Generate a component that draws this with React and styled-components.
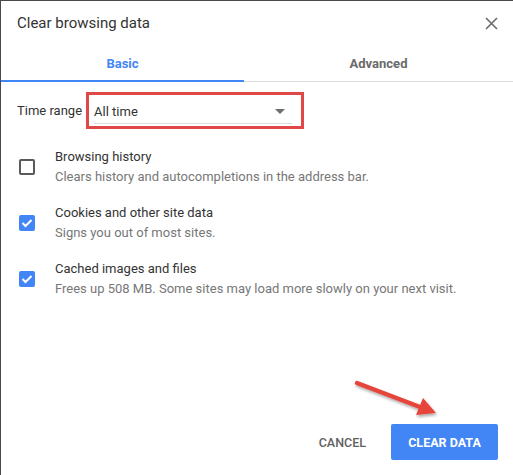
import styled, { createGlobalStyle } from 'styled-components';

const GlobalStyle = createGlobalStyle`
  html, body {
    margin: 0;
    padding: 0;
    background: #fff;
  }
  * {
    box-sizing: border-box;
  }
`;

const items = [
  {
    title: 'Browsing history',
    desc: 'Clears history and autocompletions in the address bar.',
    checked: false,
  },
  {
    title: 'Cookies and other site data',
    desc: 'Signs you out of most sites.',
    checked: true,
  },
  {
    title: 'Cached images and files',
    desc: 'Frees up 508 MB. Some sites may load more slowly on your next visit.',
    checked: true,
  },
];

export default function App() {
  return (
    <>
      <GlobalStyle />
      <Dialog>
        <Header>
          <Title>Clear browsing data</Title>
          <CloseButton aria-label="Close">
            <svg width="13" height="13" viewBox="0 0 13 13">
              <path d="M1 1 L12 12 M12 1 L1 12" stroke="#6b6b6b" strokeWidth="1.6" />
            </svg>
          </CloseButton>
        </Header>

        <Tabs>
          <Tab $active>Basic</Tab>
          <Tab>Advanced</Tab>
        </Tabs>

        <Body>
          <RangeRow>
            <RangeLabel>Time range</RangeLabel>
            <Highlight>
              <Select>
                <span>All time</span>
                <Caret />
              </Select>
            </Highlight>
          </RangeRow>

          <List>
            {items.map(item => (
              <Item key={item.title}>
                <Checkbox $checked={item.checked}>
                  {item.checked && (
                    <svg width="12" height="10" viewBox="0 0 12 10">
                      <path
                        d="M1.5 5 L4.5 8 L10.5 2"
                        fill="none"
                        stroke="#fff"
                        strokeWidth="2"
                      />
                    </svg>
                  )}
                </Checkbox>
                <ItemText>
                  <ItemTitle>{item.title}</ItemTitle>
                  <ItemDesc>{item.desc}</ItemDesc>
                </ItemText>
              </Item>
            ))}
          </List>
        </Body>

        <Footer>
          <Arrow width="100" height="45" viewBox="0 0 100 45">
            <defs>
              <filter id="shadow" x="-20%" y="-40%" width="140%" height="180%">
                <feDropShadow dx="1" dy="2" stdDeviation="1.5" floodColor="#000" floodOpacity="0.35" />
              </filter>
            </defs>
            <g filter="url(#shadow)">
              <path d="M5 7 L68 31" stroke="#e5453b" strokeWidth="4.5" strokeLinecap="round" />
              <path d="M84 37 L64 39 L71 22 Z" fill="#e5453b" />
            </g>
          </Arrow>
          <TextButton>CANCEL</TextButton>
          <PrimaryButton>CLEAR DATA</PrimaryButton>
        </Footer>
      </Dialog>
    </>
  );
}

const Dialog = styled.div`
  position: relative;
  width: 513px;
  height: 475px;
  display: flex;
  flex-direction: column;
  border-top: 1px solid #4a4a4a;
  border-left: 1px solid #4a4a4a;
  font-family: Roboto, 'Liberation Sans', sans-serif;
  color: #333;
  background: #fff;
`;

const Header = styled.div`
  height: 44px;
  display: flex;
  align-items: center;
  justify-content: space-between;
  padding: 0 10px 0 16px;
`;

const Title = styled.h1`
  margin: 0;
  font-size: 15px;
  font-weight: 400;
  color: #333;
`;

const CloseButton = styled.button`
  width: 24px;
  height: 24px;
  border: none;
  background: transparent;
  padding: 0;
  display: flex;
  align-items: center;
  justify-content: center;
  cursor: pointer;
`;

const Tabs = styled.div`
  display: grid;
  grid-template-columns: 243px 1fr;
  height: 37px;
  border-bottom: 1px solid #dedede;
`;

const Tab = styled.div`
  display: flex;
  align-items: center;
  justify-content: center;
  font-size: 13px;
  font-weight: 700;
  color: ${p => (p.$active ? '#4285f4' : '#6a6a6a')};
  box-shadow: ${p => (p.$active ? 'inset 0 -2px 0 #4285f4' : 'none')};
  margin-bottom: -1px;
`;

const Body = styled.div`
  flex: 1;
  display: flex;
  flex-direction: column;
  padding-top: 10px;
`;

const RangeRow = styled.div`
  display: flex;
  align-items: center;
  padding-left: 16px;
  gap: 4px;
`;

const RangeLabel = styled.span`
  font-size: 13px;
  color: #333;
`;

const Highlight = styled.div`
  width: 218px;
  height: 37px;
  border: 3px solid #e04848;
  padding: 0 9px 0 5px;
  display: flex;
  align-items: center;
`;

const Select = styled.div`
  flex: 1;
  height: 26px;
  display: flex;
  align-items: center;
  justify-content: space-between;
  padding: 2px 7px 0 0;
  border-bottom: 1px solid #dcdcdc;
  font-size: 13px;
  color: #333;
`;

const Caret = styled.span`
  width: 0;
  height: 0;
  border-left: 5px solid transparent;
  border-right: 5px solid transparent;
  border-top: 5px solid #6e6e6e;
`;

const List = styled.div`
  display: flex;
  flex-direction: column;
  gap: 16px;
  margin-top: 18px;
`;

const Item = styled.div`
  display: flex;
  align-items: center;
  gap: 20px;
  padding-left: 18px;
`;

const Checkbox = styled.span`
  width: 16px;
  height: 16px;
  border-radius: 2px;
  display: flex;
  align-items: center;
  justify-content: center;
  background: ${p => (p.$checked ? '#4285f4' : 'transparent')};
  border: ${p => (p.$checked ? 'none' : '2px solid #5a5a5a')};
`;

const ItemText = styled.div`
  display: flex;
  flex-direction: column;
`;

const ItemTitle = styled.span`
  font-size: 13px;
  line-height: 20px;
  color: #333;
`;

const ItemDesc = styled.span`
  font-size: 13px;
  line-height: 20px;
  color: #777;
`;

const Footer = styled.div`
  position: relative;
  display: flex;
  justify-content: flex-end;
  align-items: center;
  gap: 9px;
  padding: 0 15px 15px 0;
`;

const Arrow = styled.svg`
  position: absolute;
  left: 351px;
  top: -48px;
  overflow: visible;
`;

const TextButton = styled.button`
  height: 36px;
  padding: 0 16px;
  border: none;
  background: transparent;
  font-family: inherit;
  font-size: 12.5px;
  font-weight: 500;
  color: #616161;
  cursor: pointer;
`;

const PrimaryButton = styled.button`
  height: 36px;
  width: 107px;
  border: none;
  border-radius: 2px;
  background: #4285f4;
  font-family: inherit;
  font-size: 12.5px;
  font-weight: 700;
  color: #fff;
  cursor: pointer;
`;
